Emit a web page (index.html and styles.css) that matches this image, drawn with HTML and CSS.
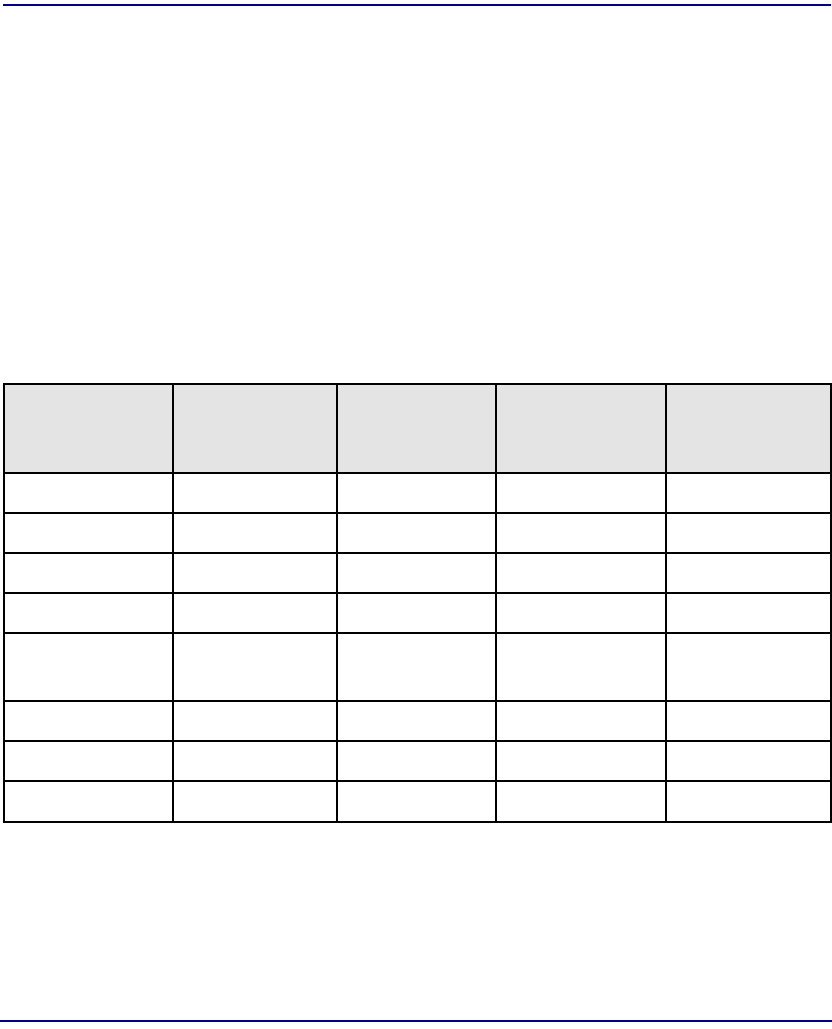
FILE: index.html
```html
<!DOCTYPE html>
<html>
<head>
<meta charset="utf-8">
<link rel="stylesheet" href="styles.css">
</head>
<body>
<div class="page">
  <div class="rule rule-top"></div>
  <div class="grid">
    <div class="cell head"></div><div class="cell head"></div><div class="cell head"></div><div class="cell head"></div><div class="cell head"></div>
    <div class="cell"></div><div class="cell"></div><div class="cell"></div><div class="cell"></div><div class="cell"></div>
    <div class="cell"></div><div class="cell"></div><div class="cell"></div><div class="cell"></div><div class="cell"></div>
    <div class="cell"></div><div class="cell"></div><div class="cell"></div><div class="cell"></div><div class="cell"></div>
    <div class="cell"></div><div class="cell"></div><div class="cell"></div><div class="cell"></div><div class="cell"></div>
    <div class="cell"></div><div class="cell"></div><div class="cell"></div><div class="cell"></div><div class="cell"></div>
    <div class="cell"></div><div class="cell"></div><div class="cell"></div><div class="cell"></div><div class="cell"></div>
    <div class="cell"></div><div class="cell"></div><div class="cell"></div><div class="cell"></div><div class="cell"></div>
    <div class="cell"></div><div class="cell"></div><div class="cell"></div><div class="cell"></div><div class="cell"></div>
  </div>
  <div class="rule rule-bottom"></div>
</div>
</body>
</html>
```
FILE: styles.css
```css
html, body {
  margin: 0;
  padding: 0;
  background: #ffffff;
  font-family: "Liberation Sans", Arial, sans-serif;
}
.page {
  display: flex;
  flex-direction: column;
  width: 832px;
  height: 1029px;
}
.rule {
  height: 2px;
  background: #000080;
}
.rule-top {
  margin: 4px 1px 0 3px;
}
.rule-bottom {
  margin: 197px 0 0 0;
}
.grid {
  margin: 377px 0 0 3px;
  width: 829px;
  box-sizing: border-box;
  display: grid;
  grid-template-columns: 169px 164px 159px 170px 165px;
  grid-template-rows: 89px 40px 40px 40px 40px 68px 40px 40px 41px;
  border-left: 2px solid #000;
  border-top: 2px solid #000;
}
.cell {
  box-sizing: border-box;
  border-right: 2px solid #000;
  border-bottom: 2px solid #000;
  min-width: 0;
}
.cell:nth-child(5n) {
  /* grid width ends at container edge */
}
.head {
  background: #e4e4e4;
}
```
